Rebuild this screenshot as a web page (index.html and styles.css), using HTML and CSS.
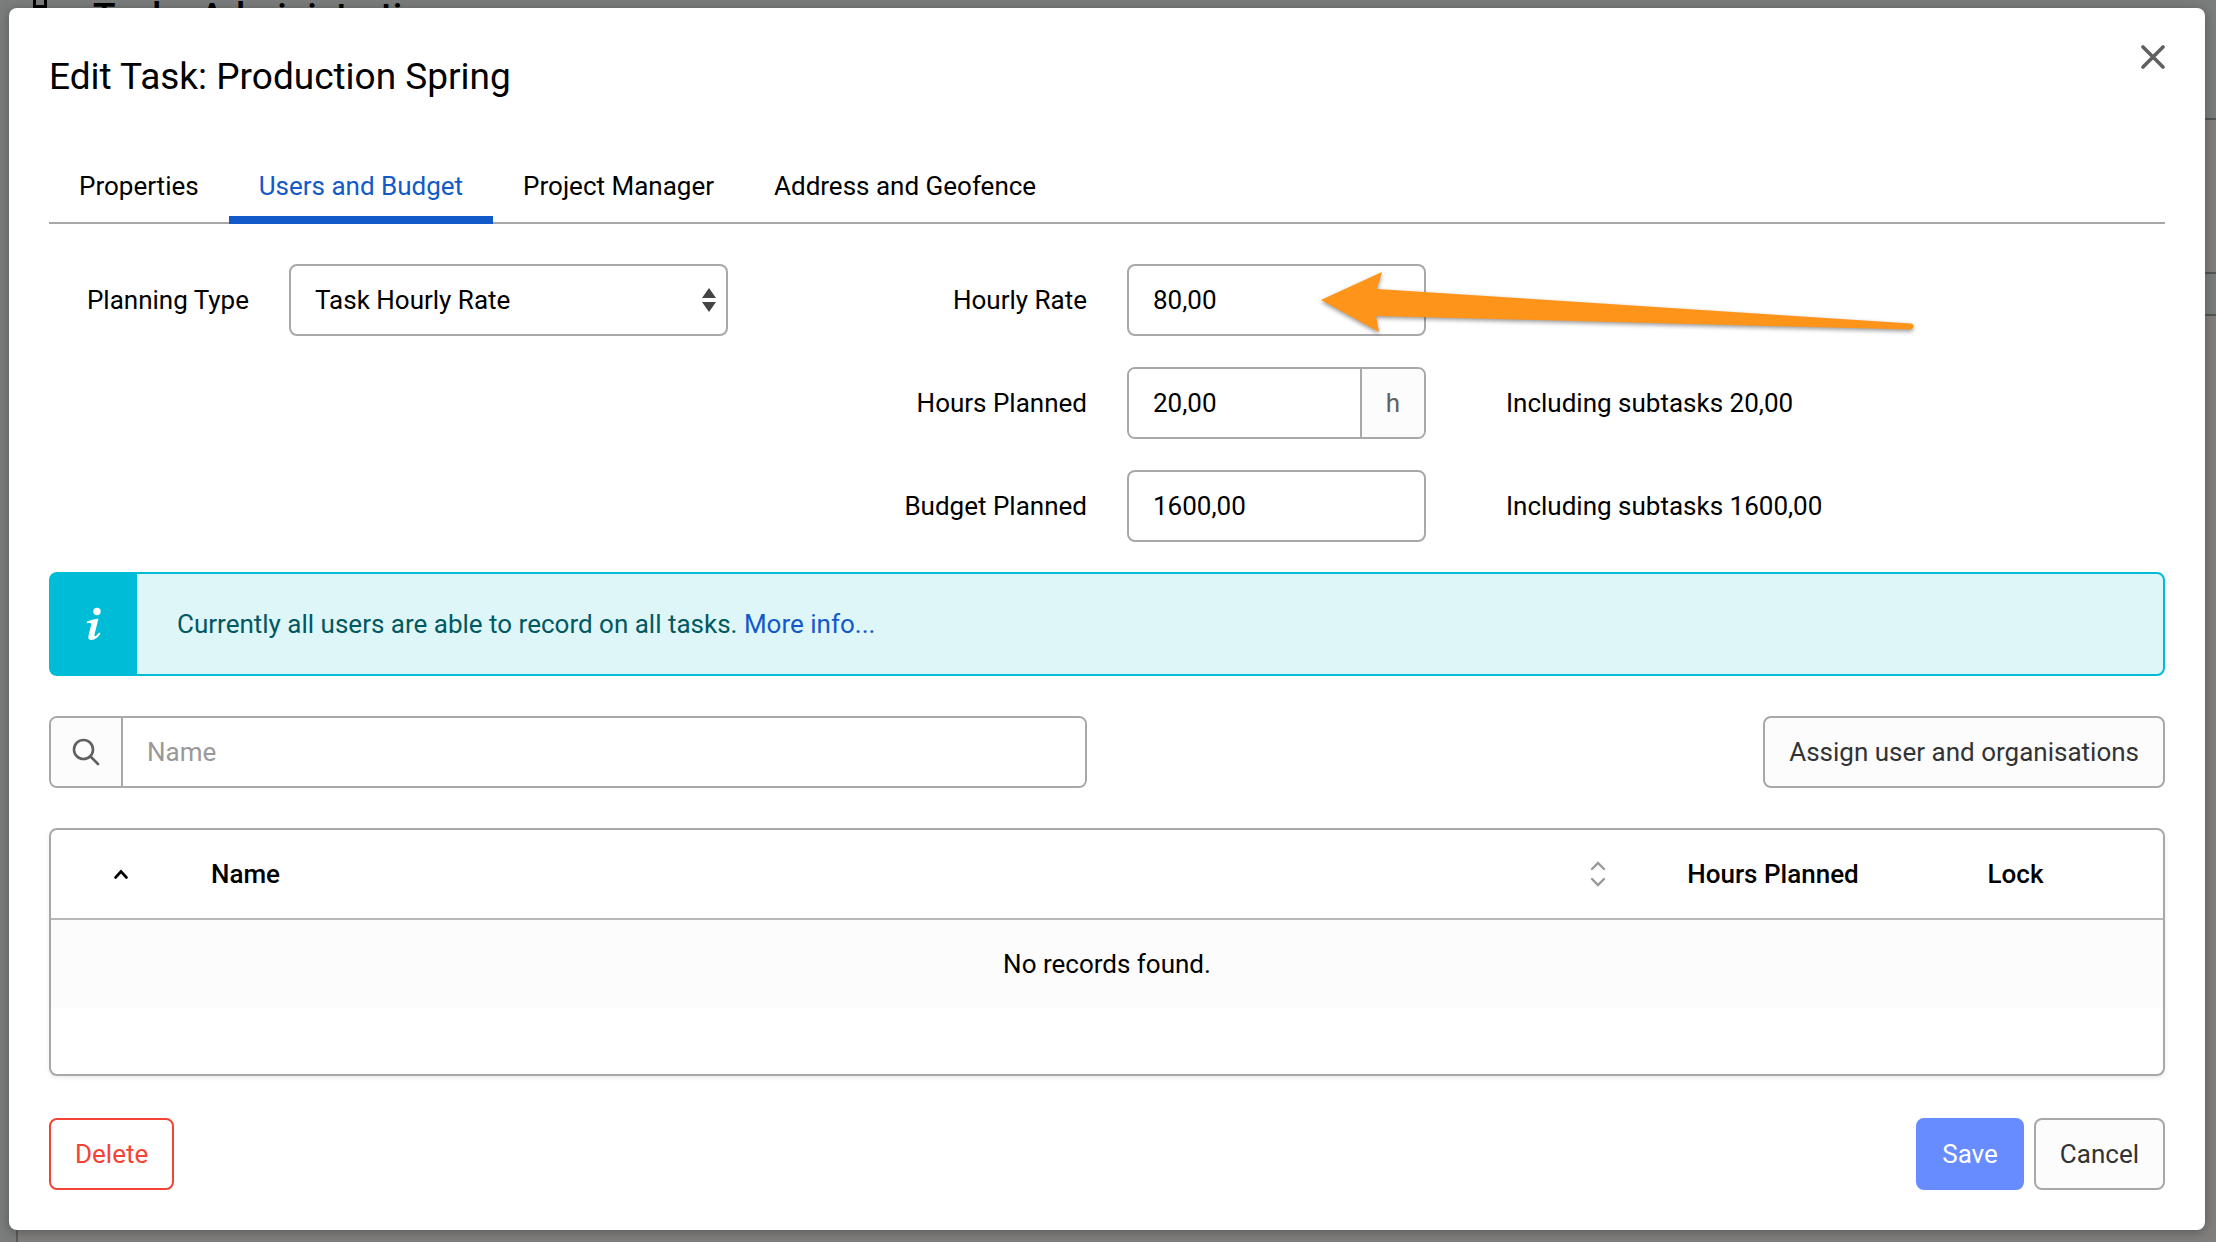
FILE: index.html
```html
<!DOCTYPE html>
<html lang="en">
<head>
<meta charset="utf-8">
<meta name="viewport" content="width=device-width, initial-scale=1">
<title>Edit Task: Production Spring</title>
<link rel="stylesheet" href="styles.css">
</head>
<body>
<div class="page" aria-hidden="true">
  <div class="page-header">
    <svg class="page-icon" width="14" height="24" viewBox="0 0 14 24"><rect x="1.5" y="1.5" width="11" height="21" fill="none" stroke="#000" stroke-width="3"/></svg>
    <span class="page-title">Tasks Administration</span>
  </div>
  <div class="page-filter"></div>
  <div class="page-columns"></div>
  <div class="page-list"></div>
</div>

<main class="dialog" role="dialog" aria-labelledby="dialog-title">
  <header class="dialog-header">
    <h1 class="dialog-title" id="dialog-title">Edit Task: Production Spring</h1>
    <button class="close" type="button" aria-label="Close">
      <svg width="24" height="24" viewBox="0 0 24 24"><path d="M2 2 22 22M22 2 2 22" stroke="#606060" stroke-width="3.6" stroke-linecap="round"/></svg>
    </button>
  </header>

  <nav class="tabs">
    <a class="tab" href="#properties">Properties</a>
    <a class="tab tab-active" href="#users" aria-current="page">Users and Budget</a>
    <a class="tab" href="#manager">Project Manager</a>
    <a class="tab" href="#address">Address and Geofence</a>
  </nav>

  <form class="form">
    <div class="planning">
      <label class="label" for="type">Planning Type</label>
      <div class="select-wrap">
        <select class="control" id="type"><option>Task Hourly Rate</option></select>
        <svg class="select-arrows" width="14" height="24" viewBox="0 0 14 24"><path d="M7 0 14 10H0ZM0 14H14L7 24Z" fill="#444"/></svg>
      </div>

      <label class="label rate-label" for="rate">Hourly Rate</label>
      <div class="rate">
        <input class="control" id="rate" type="text" value="80,00">
        <svg class="arrow" width="600" height="68" viewBox="0 0 600 68"><path d="M0 28 61 0 56 17 590 51.500Q593 52 592.500 54.500Q592 57.500 589 57.500L55 44 58 60Z" fill="#ff941a"/></svg>
      </div>

      <label class="label hours-label" for="hours">Hours Planned</label>
      <div class="group">
        <input class="control" id="hours" type="text" value="20,00">
        <span class="addon addon-end">h</span>
      </div>
      <span class="note">Including subtasks 20,00</span>

      <label class="label budget-label" for="budget">Budget Planned</label>
      <input class="control" id="budget" type="text" value="1600,00">
      <span class="note">Including subtasks 1600,00</span>
    </div>

    <div class="alert">
      <div class="alert-icon">
        <svg width="18" height="34" viewBox="0 0 18 34" fill="#fff"><ellipse cx="12" cy="4.500" rx="3.700" ry="3.700"/><path d="M2 14.500Q7 12.500 13.500 11.500L9.500 27.500Q9 29.500 10.200 29.300Q12 28.500 14 25.500L15.500 26.500Q11.500 33 6.500 33Q2.500 33 3.500 28.500L6.200 17.800Q6.700 15.800 5 15.900L1.800 16.200Z"/></svg>
      </div>
      <p class="alert-text">Currently all users are able to record on all tasks. <a class="link" href="#info">More info...</a></p>
    </div>

    <div class="toolbar">
      <div class="group">
        <span class="addon addon-start">
          <svg width="28" height="28" viewBox="0 0 28 28" fill="none" stroke="#606060" stroke-width="2.600" stroke-linecap="round"><circle cx="11.500" cy="11.500" r="9.500"/><path d="M18.500 18.500 26 26"/></svg>
        </span>
        <input class="control" type="text" placeholder="Name" aria-label="Name">
      </div>
      <button class="button" type="button">Assign user and organisations</button>
    </div>

    <div class="table-box">
      <table class="table">
        <thead>
          <tr>
            <th class="col-toggle" aria-label="Sort">
              <svg class="caret" width="16" height="12" viewBox="0 0 16 12" fill="none" stroke="#000" stroke-width="2.600" stroke-linecap="round"><path d="M2.500 9.500 8 3.500 13.500 9.500"/></svg>
            </th>
            <th class="col-name">
              <div class="name-head">Name
                <svg width="16" height="26" viewBox="0 0 16 26" fill="none" stroke="#999" stroke-width="2.400" stroke-linecap="round"><path d="M2 8 8 2 14 8M2 18 8 24 14 18"/></svg>
              </div>
            </th>
            <th class="col-hours">Hours Planned</th>
            <th class="col-lock">Lock</th>
          </tr>
        </thead>
        <tbody>
          <tr><td colspan="4">No records found.</td></tr>
        </tbody>
      </table>
    </div>

    <footer class="actions">
      <button class="button button-danger" type="button">Delete</button>
      <div class="actions-end">
        <button class="button button-primary" type="submit">Save</button>
        <button class="button" type="button">Cancel</button>
      </div>
    </footer>
  </form>
</main>
</body>
</html>
```
FILE: styles.css
```css
* {
  box-sizing: border-box;
}

body {
  display: grid;
  grid-template-columns: 100%;
  min-height: 100vh;
  margin: 0;
  background: #7a7d7b;
  color: #000;
  font: 26px/30px Roboto, sans-serif;
}

.page,
.dialog {
  grid-area: 1 / 1;
}

/* dimmed page behind the dialog */
.page {
  display: flex;
  flex-direction: column;
  padding-left: 16px;
}

.page-header {
  display: flex;
  align-items: flex-start;
  gap: 46px;
  height: 120px;
  padding-left: 17px;
  border-bottom: 2px solid #545553;
}

.page-icon {
  flex: none;
  margin-top: -16px;
}

.page-title {
  margin-top: -5px;
  font-size: 37px;
  font-weight: 500;
  line-height: 44px;
}

.page-filter {
  height: 154px;
  border-bottom: 2px solid #545553;
  background: #807f7e;
}

.page-columns {
  height: 42px;
  border-bottom: 2px solid #545553;
}

.page-list {
  flex: 1;
  border-left: 2px solid #5a5a5a;
  background: #807f7e;
}

.dialog {
  align-self: start;
  position: relative;
  margin: 8px 11px 12px 9px;
  padding: 47px 40px 40px;
  border-radius: 8px;
  background: #fff;
  box-shadow: 0 2px 12px rgba(0, 0, 0, 0.3);
}

.dialog-header {
  display: flex;
  justify-content: space-between;
  align-items: flex-start;
}

.dialog-title {
  margin: 0;
  font-size: 37px;
  font-weight: 400;
  line-height: 44px;
}

.close {
  display: flex;
  margin: -10px 0 0;
  padding: 0;
  border: 0;
  background: none;
}

.tabs {
  display: flex;
  margin-top: 53px;
  background: linear-gradient(#a8a8a8, #a8a8a8) bottom / 100% 2px no-repeat;
}

.tab {
  padding: 19px 30px 15px;
  border-bottom: 8px solid transparent;
  color: #000;
  text-decoration: none;
}

.tab-active {
  border-color: #1259c9;
  color: #1259c9;
}

.planning {
  display: grid;
  grid-template-columns: 200fr 439fr 319fr 299fr 699fr;
  gap: 31px 40px;
  align-items: center;
  margin-top: 40px;
}

.label {
  text-align: right;
}

.hours-label,
.budget-label {
  grid-column: 3;
}

.note {
  padding-left: 40px;
}

.control {
  display: block;
  width: 100%;
  min-width: 0;
  height: 72px;
  padding: 0 24px;
  border: 2px solid #a8a8a8;
  border-radius: 8px;
  background: #fff;
  color: #000;
  font: inherit;
  appearance: none;
}

.control::placeholder {
  color: #999;
  opacity: 1;
}

.select-wrap,
.rate {
  position: relative;
}

.select-arrows {
  position: absolute;
  top: 24px;
  right: 12px;
  pointer-events: none;
}

.arrow {
  position: absolute;
  top: 8px;
  left: 194px;
  z-index: 1;
  overflow: visible;
  pointer-events: none;
  filter: drop-shadow(0 2px 2px rgba(0, 0, 0, 0.4));
}

.group {
  display: flex;
  border: 2px solid #a8a8a8;
  border-radius: 8px;
  overflow: hidden;
}

.group .control {
  flex: 1;
  height: 68px;
  border: 0;
  border-radius: 0;
}

.addon {
  display: flex;
  flex: none;
  align-items: center;
  justify-content: center;
  background: #fcfcfc;
  color: #606060;
}

.addon-end {
  width: 64px;
  border-left: 2px solid #a8a8a8;
}

.addon-start {
  width: 72px;
  border-right: 2px solid #a8a8a8;
}

.alert {
  display: flex;
  min-height: 104px;
  margin-top: 30px;
  border: 2px solid #00bcd6;
  border-radius: 8px;
  background: #dff6f9;
}

.alert-icon {
  display: flex;
  flex: none;
  align-items: center;
  justify-content: center;
  width: 86px;
  background: #00bcd6;
}

.alert-text {
  align-self: center;
  margin: 0;
  padding: 0 40px;
  color: #005960;
}

.link {
  color: #1259c9;
  text-decoration: none;
}

.toolbar {
  display: grid;
  grid-template-columns: 1038fr 1038fr;
  gap: 40px;
  margin-top: 40px;
}

.button {
  height: 72px;
  padding: 0 24px;
  border: 2px solid #a8a8a8;
  border-radius: 8px;
  background: #fcfcfc;
  color: #333;
  font: inherit;
}

.toolbar .button {
  justify-self: end;
}

.table-box {
  min-height: 248px;
  margin-top: 40px;
  border: 2px solid #a8a8a8;
  border-radius: 8px;
  box-shadow: 0 2px 4px rgba(0, 0, 0, 0.08);
}

.table {
  width: 100%;
  border-collapse: separate;
  border-spacing: 0;
  table-layout: fixed;
}

.table th {
  height: 90px;
  padding: 0;
  border-bottom: 2px solid #b8b8b8;
  font-weight: 500;
}

.table td {
  height: 88px;
  padding: 0;
  background: #fcfcfc;
  text-align: center;
}

.caret {
  display: block;
  margin: 0 auto;
}

.col-toggle {
  width: 140px;
}

.col-hours {
  width: 190px;
}

.col-lock {
  width: 295px;
}

.name-head {
  display: flex;
  align-items: center;
  justify-content: space-between;
  padding: 0 72px 0 20px;
}

.actions {
  display: flex;
  justify-content: space-between;
  margin-top: 42px;
}

.actions-end {
  display: flex;
  gap: 10px;
}

.button-primary {
  border-color: #668cff;
  background: #668cff;
  color: #fff;
}

.button-danger {
  border-color: #f44336;
  background: #fff;
  color: #f44336;
}
```
